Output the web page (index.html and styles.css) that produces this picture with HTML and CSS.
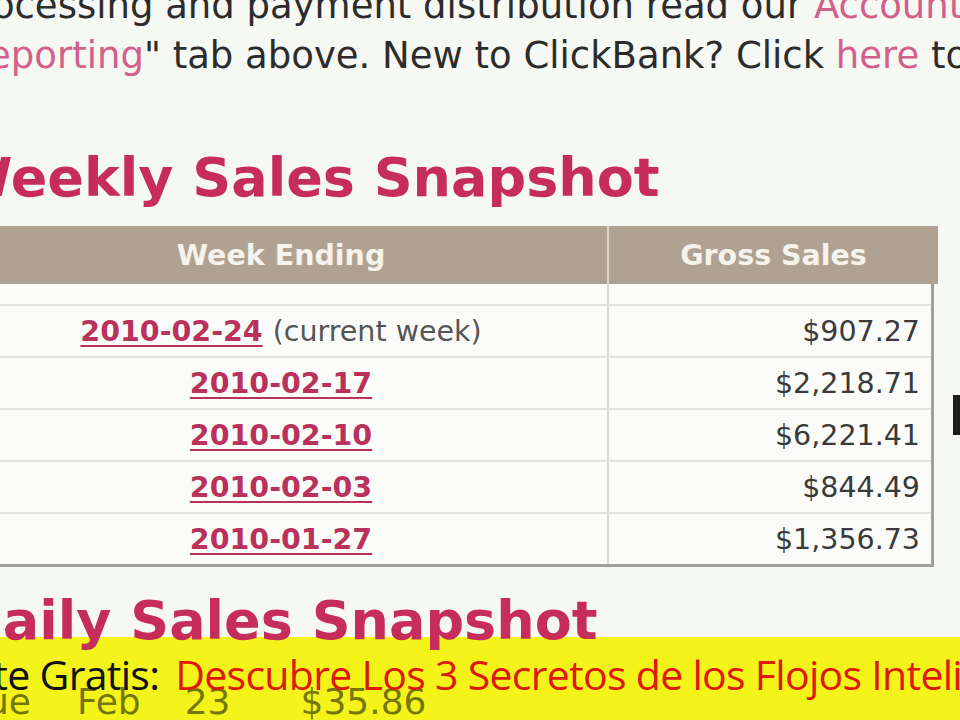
FILE: index.html
```html
<!DOCTYPE html>
<html>
<head>
<meta charset="utf-8">
<link rel="stylesheet" href="styles.css">
</head>
<body>
<div class="page">
  <div class="intro">
    <div class="line l1">processing and payment distribution read our <a class="lnk">Accounting &amp;</a></div>
    <div class="line l2"><a class="lnk">Reporting</a>" tab above. New to ClickBank? Click <a class="lnk">here</a> to learn more.</div>
  </div>
  <h2 class="title weekly">Weekly Sales Snapshot</h2>
  <div class="tablerow">
    <div class="sales">
      <div class="thead">
        <div class="th">Week Ending</div>
        <div class="th th2">Gross Sales</div>
      </div>
      <div class="tbody">
        <div class="spacer"></div><div class="spacer sp2"></div>
        <div class="td"><a class="date">2010-02-24</a> <span class="note">(current week)</span></div>
        <div class="td num">$907.27</div>
        <div class="td"><a class="date">2010-02-17</a></div>
        <div class="td num">$2,218.71</div>
        <div class="td"><a class="date">2010-02-10</a></div>
        <div class="td num">$6,221.41</div>
        <div class="td"><a class="date">2010-02-03</a></div>
        <div class="td num">$844.49</div>
        <div class="td"><a class="date">2010-01-27</a></div>
        <div class="td num">$1,356.73</div>
      </div>
    </div>
    <div class="edge"></div>
  </div>
  <h2 class="title daily">Daily Sales Snapshot</h2>
</div>
<div class="banner">
  <div class="ghost"><span class="g1">ue</span><span class="g2">Feb</span><span class="g3">23</span><span class="g4">$35.86</span></div>
  <div class="promo"><span class="blk">Reporte Gratis:</span> <span class="red">Descubre Los 3 Secretos de los Flojos Inteligentes</span></div>
</div>
</body>
</html>
```
FILE: styles.css
```css
html, body {
  margin: 0;
  padding: 0;
}
body {
  width: 960px;
  height: 720px;
  overflow: hidden;
  background: #f6f8f4;
  font-family: "DejaVu Sans", Verdana, sans-serif;
  color: #333;
  position: relative;
}
.page {
  display: flex;
  flex-direction: column;
}
.intro {
  margin-top: -19px;
  font-size: 37px;
  line-height: 50px;
  color: #2c2c2c;
  white-space: nowrap;
}
.l1 { text-indent: -46px; }
.l2 { text-indent: -36px; }
.lnk {
  color: #d2608a;
  text-decoration: none;
}
.title {
  margin: 0;
  font-size: 54px;
  line-height: 64px;
  font-weight: bold;
  color: #c62d5b;
  white-space: nowrap;
}
.weekly {
  margin-top: 65px;
  text-indent: -47px;
}
.tablerow {
  display: flex;
  margin-top: 16px;
  margin-left: -45px;
}
.sales {
  width: 983px;
}
.thead {
  display: grid;
  grid-template-columns: 652px 331px;
  height: 58px;
  background: #b0a292;
}
.th {
  display: flex;
  align-items: center;
  justify-content: center;
  font-size: 28.5px;
  font-weight: bold;
  color: #f6f2ec;
}
.th2 {
  border-left: 2px solid #ddd3c6;
}
.tbody {
  width: 976px;
  display: grid;
  grid-template-columns: 652px 324px;
  background: #fbfcfa;
  border-right: 3px solid #a29e99;
  border-bottom: 3px solid #a29e99;
}
.spacer {
  height: 20px;
}
.sp2 {
  border-left: 2px solid #d8d8d6;
}
.td {
  height: 50px;
  border-top: 2px solid #e2e3e0;
  display: flex;
  align-items: center;
  justify-content: center;
  font-size: 28.5px;
  white-space: nowrap;
}
.num {
  justify-content: flex-end;
  padding-right: 11px;
  border-left: 2px solid #d8d8d6;
  color: #3a3a3a;
}
.date {
  font-weight: bold;
  color: #b8325c;
  text-decoration: underline;
  text-decoration-thickness: 2px;
  text-underline-offset: 4px;
}
.note {
  margin-left: 10px;
  color: #555;
}
.edge {
  width: 7px;
  height: 40px;
  margin-top: 169px;
  margin-left: 15px;
  background: #1e1e1e;
}
.daily {
  margin-top: 22px;
  text-indent: -42px;
  position: relative;
  z-index: 2;
}
.banner {
  position: absolute;
  left: 0;
  top: 637px;
  width: 960px;
  height: 83px;
  background: #f4f41a;
  z-index: 1;
  overflow: hidden;
}
.ghost {
  position: absolute;
  left: 0;
  top: 44px;
  display: flex;
  font-size: 36px;
  color: rgba(60, 60, 0, 0.7);
  white-space: nowrap;
}
.g1 { margin-left: -14px; }
.g2 { margin-left: 46px; }
.g3 { margin-left: 44px; }
.g4 { margin-left: 70px; }
.promo {
  position: relative;
  padding-top: 12px;
  font-family: "Open Sans", "Noto Sans", sans-serif;
  font-size: 41px;
  line-height: 50px;
  letter-spacing: -0.7px;
  white-space: nowrap;
  text-indent: -118px;
}
.blk { color: #111; }
.red { color: #dd1a08; margin-left: 6px; }
```
